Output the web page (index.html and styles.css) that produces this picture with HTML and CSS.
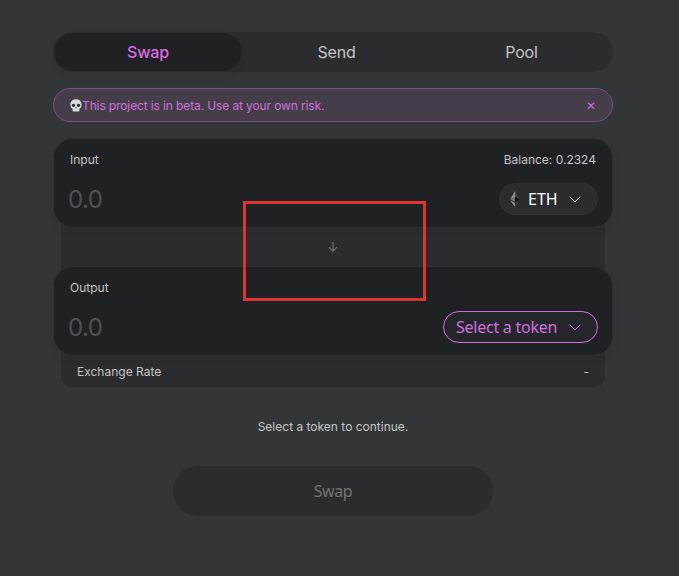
FILE: index.html
```
<!DOCTYPE html>
<html lang="en">
<head>
<meta charset="utf-8">
<title>Swap</title>
<link rel="stylesheet" href="styles.css">
</head>
<body>
<main class="exchange">
  <nav class="tabs">
    <a class="tab tab-active">Swap</a>
    <a class="tab">Send</a>
    <a class="tab">Pool</a>
  </nav>
  <div class="banner">
    <svg class="skull" viewBox="0 0 12 13"><path fill="#d5dce0" d="M6 .3C2.7.3.4 2.5.4 5.6c0 1.500.5 2.600 1 3.300.3.6 1.200.4 1.200 1v1.500c0 .8.6 1.200 1.300 1.200h4.200c.7 0 1.300-.4 1.300-1.200V9.900c0-.6.9-.4 1.200-1 .5-.7 1-1.800 1-3.300C11.600 2.500 9.300.3 6 .3z"/><circle cx="3.500" cy="6.300" r="1.600" fill="#27252b"/><circle cx="8.500" cy="6.300" r="1.600" fill="#27252b"/><path fill="#27252b" d="M6 7.700 5.200 9.300h1.600z"/></svg>
    <span class="banner-text">This project is in beta. Use at your own risk.</span>
    <span class="close">✕</span>
  </div>
  <section class="card">
    <div class="card-head"><span>Input</span><span class="balance">Balance: 0.2324</span></div>
    <div class="card-body">
      <span class="amount">0.0</span>
      <button class="token token-eth">
        <svg class="eth" viewBox="0 0 10 16"><path fill="#929292" d="M5 0v6L.2 8.200z"/><path fill="#444" d="M5 0l4.800 8.200L5 6z"/><path fill="#777" d="M5 6v5L.2 8.200z"/><path fill="#141414" d="M5 6l4.800 2.200L5 11z"/><path fill="#929292" d="M.2 9.200 5 12v4z"/><path fill="#393939" d="M9.800 9.200 5 12v4z"/></svg>
        <span class="eth-label">ETH</span>
        <svg class="chevron" viewBox="0 0 12 7"><path d="M.7.7 6 5.900 11.300.7"/></svg>
      </button>
    </div>
  </section>
  <div class="middle">
    <svg class="arrow" viewBox="0 0 10 10"><path d="M5 0v9.200M1 5.200l4 4 4-4"/></svg>
    <div class="highlight"></div>
  </div>
  <section class="card">
    <div class="card-head"><span>Output</span></div>
    <div class="card-body">
      <span class="amount">0.0</span>
      <button class="token token-select">
        <span class="select-label">Select a token</span>
        <svg class="chevron" viewBox="0 0 12 7"><path d="M.7.7 6 5.900 11.300.7"/></svg>
      </button>
    </div>
  </section>
  <div class="rate"><span>Exchange Rate</span><span>-</span></div>
  <p class="hint">Select a token to continue.</p>
  <button class="submit">Swap</button>
</main>
</body>
</html>
```
FILE: styles.css
```
* { box-sizing: border-box; }
body {
  margin: 0;
  min-height: 576px;
  background: #333639;
  color: #c4c4c4;
  font: 12px/16px Inter, "Liberation Sans", sans-serif;
}
.exchange {
  width: 560px;
  margin-left: 53px;
  padding-top: 32px;
  display: flex;
  flex-direction: column;
}
.tabs {
  height: 40px;
  display: flex;
  background: #2b2c30;
  border-radius: 20px;
}
.tab {
  flex: 1;
  padding: 0 0 1px 2px;
  display: flex;
  align-items: center;
  justify-content: center;
  font-size: 16px;
  letter-spacing: -.15px;
}
.tab-active {
  flex: 0 0 190px;
  padding-left: 0;
  background: #202124;
  border: 1px solid #2d2e2f;
  border-radius: 20px;
  color: #dc6be5;
  font-weight: 500;
  box-shadow: 0 4px 8px rgba(0, 0, 0, .06);
}
.banner {
  height: 34px;
  margin: 16px 0;
  padding: 2px 16px 0 16px;
  display: flex;
  align-items: center;
  background: #453d49;
  border: 1px solid #7e4f89;
  border-radius: 17px;
  color: #cd70dc;
}
.skull { width: 12px; height: 13px; margin-top: -2px; }
.banner-text { letter-spacing: -.12px; }
.close { margin-left: auto; font-size: 12px; }
.card {
  position: relative;
  z-index: 1;
  height: 90px;
  padding: 13px 14px 0 16px;
  background: #202124;
  border: 1px solid #2e2f31;
  border-radius: 20px;
  box-shadow: 0 4px 8px rgba(0, 0, 0, .06);
}
.card-head { display: flex; justify-content: space-between; }
.balance { margin-right: 2px; }
.card-body {
  height: 32px;
  margin-top: 15px;
  display: flex;
  align-items: center;
  justify-content: space-between;
}
.amount { margin: 2px 0 0 -2px; font-size: 24px; letter-spacing: -.6px; color: #515151; }
.token {
  height: 32px;
  padding: 0 16px 0 12px;
  display: flex;
  align-items: center;
  border-radius: 16px;
  font: 16px/20px "Noto Sans", sans-serif;
}
.token-eth { width: 99px; padding-left: 10px; background: #2b2c2f; border: 1px solid #313234; color: #fff; }
.token-select { width: 155px; background: #25262b; border: 1px solid #cf70dd; color: #cf70dd; }
.eth { width: 10px; height: 16px; margin-right: 8px; }
.eth-label, .select-label { white-space: nowrap; }
.select-label { letter-spacing: -.25px; }
.chevron { width: 12px; height: 7px; margin-left: auto; fill: none; stroke: currentColor; stroke-width: 1; flex: none; }
.middle {
  position: relative;
  height: 78px;
  margin: -20px 8px;
  display: flex;
  align-items: center;
  justify-content: center;
  background: #2b2c30;
}
.arrow { width: 10px; height: 10px; fill: none; stroke: #737373; stroke-width: 1.2; }
.highlight {
  position: absolute;
  z-index: 2;
  left: 182px;
  top: -7px;
  width: 183px;
  height: 100px;
  border: 3px solid #dc3530;
}
.rate {
  height: 51px;
  margin: -20px 8px 0;
  padding: 28px 16px 0;
  display: flex;
  justify-content: space-between;
  background: #2b2c30;
  border-radius: 0 0 10px 10px;
}
.hint { margin: 32px 0 31px; text-align: center; }
.submit {
  width: 320px;
  height: 50px;
  align-self: center;
  border: 0;
  border-radius: 25px;
  background: #2b2c30;
  color: #747474;
  font: 16px/20px "Noto Sans", sans-serif;
  letter-spacing: -.4px;
}
```
